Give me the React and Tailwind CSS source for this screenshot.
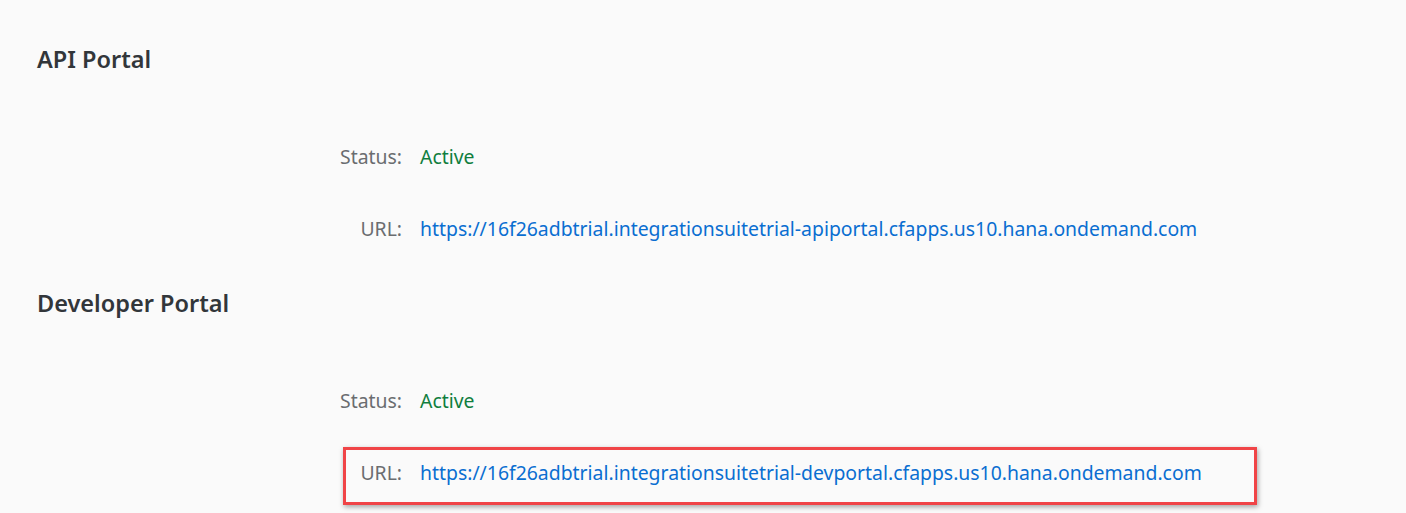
export default function App() {
  const sections = [
    { title: 'API Portal', url: 'https://16f26adbtrial.integrationsuitetrial-apiportal.cfapps.us10.hana.ondemand.com' },
    { title: 'Developer Portal', url: 'https://16f26adbtrial.integrationsuitetrial-devportal.cfapps.us10.hana.ondemand.com', marked: true },
  ];

  return (
    <div className="w-[1406px] h-[513px] overflow-hidden bg-[#fafafa] pl-[37px] pt-[45px]" style={{ fontFamily: '"Noto Sans", "Liberation Sans", sans-serif' }}>
      {sections.map((s) => (
        <div key={s.title} className="h-[244px]">
          <h2 className="text-[23.5px] leading-[28px] font-semibold text-[#32363a]">{s.title}</h2>
          <div className="mt-[70px] flex items-center h-[28px] text-[19.4px]">
            <span className="w-[365px] text-right text-[#6a6d70]">Status:</span>
            <span className="ml-[18px] text-[#107e3e]">Active</span>
          </div>
          <div className="relative mt-[44px] flex items-center h-[28px] text-[19.4px]">
            <span className="w-[365px] text-right text-[#6a6d70]">URL:</span>
            <a className="ml-[18px] text-[#0a6ed1]">{s.url}</a>
            {s.marked && (
              <div className="absolute left-[306px] top-[-12px] w-[914px] h-[58px] border-[3px] border-[#f04447] shadow-[1px_2px_5px_rgba(0,0,0,0.35)]" />
            )}
          </div>
        </div>
      ))}
    </div>
  );
}
